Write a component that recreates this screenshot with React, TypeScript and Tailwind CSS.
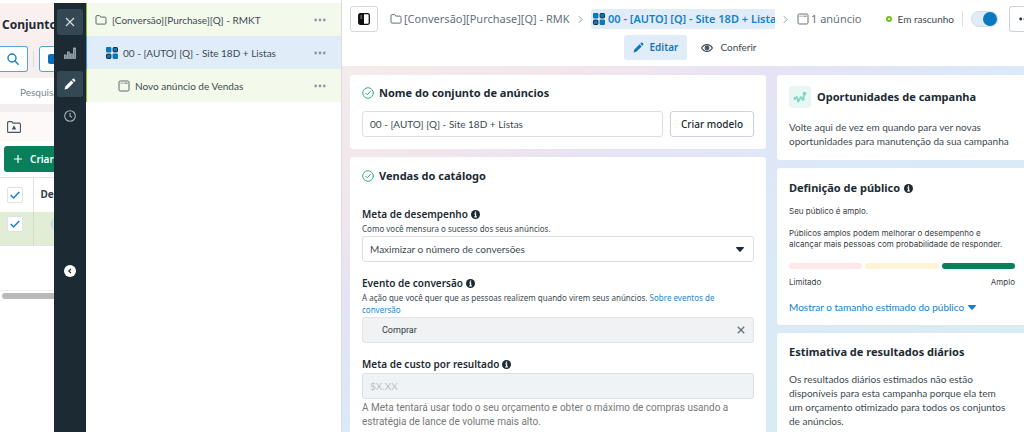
import { useState, type ReactNode } from "react";

const lato = "font-['Lato','Noto_Sans',sans-serif]";
const noto = "font-['Noto_Sans',sans-serif]";

function FolderIcon({ className }: { className: string }) {
  return (
    <svg viewBox="0 0 12 12" className={className} fill="none" stroke="currentColor" strokeWidth="1" strokeLinejoin="round">
      <path d="M1 2.6c0-.6.4-1 1-1h2.3c.4 0 .7.2.9.5l.6 1h4.2c.6 0 1 .4 1 1v5c0 .6-.4 1-1 1H2c-.6 0-1-.4-1-1z" />
    </svg>
  );
}

function GridIcon({ className }: { className: string }) {
  return (
    <svg viewBox="0 0 12 12" className={className}>
      <rect x="0" y="0" width="5.4" height="5.4" rx="1" fill="#0a78be" />
      <rect x="7.1" y="0.5" width="4.4" height="4.4" rx="0.8" fill="#0a78be" stroke="#1c2b33" />
      <rect x="0.5" y="7.1" width="4.4" height="4.4" rx="0.8" fill="#0a78be" stroke="#1c2b33" />
      <rect x="6.6" y="6.6" width="5.4" height="5.4" rx="1" fill="#0a78be" />
    </svg>
  );
}

function AdIcon({ className }: { className: string }) {
  return (
    <svg viewBox="0 0 12 12" className={className} fill="none" stroke="currentColor" strokeWidth="1">
      <rect x="1" y="1" width="10" height="10" rx="1.2" />
      <path d="M2.6 3.2h1M4.6 3.2h1M6.6 3.2h3" />
    </svg>
  );
}

function PencilIcon({ className }: { className: string }) {
  return (
    <svg viewBox="0 0 12 12" className={className} fill="currentColor">
      <path d="M.6 11.4l.7-3L7.2 2.5l2.3 2.3-5.9 5.9zM7.9 1.8l.9-.9c.4-.4 1-.4 1.4 0l.9.9c.4.4.4 1 0 1.4l-.9.9z" />
    </svg>
  );
}

function CheckCircle() {
  return (
    <svg viewBox="0 0 12 12" className="size-3 shrink-0" fill="none" stroke="#3fae86" strokeWidth="1" strokeLinecap="round" strokeLinejoin="round">
      <circle cx="6" cy="6" r="5.3" />
      <path d="M3.8 6.3l1.5 1.5 3-3.3" />
    </svg>
  );
}

function InfoIcon() {
  return (
    <svg viewBox="0 0 10 10" className="size-[9px] shrink-0">
      <circle cx="5" cy="5" r="5" fill="#1c2b33" />
      <path d="M5 1.6v1.5M3.7 4.4h1.4v3.1M3.6 7.6h2.9" stroke="#fff" strokeWidth="1.4" fill="none" />
    </svg>
  );
}

function Chevron() {
  return (
    <svg viewBox="0 0 6 10" className="h-[9px] w-[5px] shrink-0 text-[#8a949b]" fill="none" stroke="currentColor" strokeWidth="1.1">
      <path d="M1 1l4 4-4 4" />
    </svg>
  );
}

function Caret({ className }: { className: string }) {
  return (
    <svg viewBox="0 0 8 5" className={className} fill="currentColor">
      <path d="M.6 0h6.8c.5 0 .7.5.4.9L4.6 4.6c-.3.4-.9.4-1.2 0L.2.9C-.1.5.1 0 .6 0z" />
    </svg>
  );
}

function Dots() {
  return (
    <svg viewBox="0 0 12 4" className="h-1 w-3" fill="currentColor">
      <circle cx="1.7" cy="2" r="1.4" />
      <circle cx="6" cy="2" r="1.4" />
      <circle cx="10.3" cy="2" r="1.4" />
    </svg>
  );
}

function Tick({ label }: { label: string }) {
  return (
    <label className="grid size-4 place-items-center">
      <input type="checkbox" defaultChecked aria-label={label} className="peer col-start-1 row-start-1 size-4 appearance-none rounded-[2px] border border-[#dfe3e8] bg-white" />
      <svg viewBox="0 0 10 8" className="invisible pointer-events-none col-start-1 row-start-1 h-2 w-[10px] peer-checked:visible" fill="none" stroke="#1580cc" strokeWidth="1.5">
        <path d="M.7 4l2.8 2.9L9.3 .9" />
      </svg>
    </label>
  );
}

function CampaignList() {
  return (
    <section className="mt-[3px] w-[54px] shrink-0 overflow-hidden whitespace-nowrap bg-white">
      <div className="bg-linear-to-b from-[#fbf1ef] to-[#f5eeef]">
        <h1 className={`${noto} pt-[13px] pl-[2px] text-xs leading-[18px] font-bold text-[#1c2b33]`}>Conjuntos de anúncios</h1>
        <div className="mt-[12px] flex h-[26px] w-40 items-center">
          <button aria-label="Buscar" className="flex h-[26px] w-7 items-center justify-center rounded-r-[3px] border border-l-0 border-[#55a2d8] bg-white text-[#1580c4]">
            <svg viewBox="0 0 12 12" className="mr-[2px] size-3" fill="none" stroke="currentColor" strokeWidth="1.4" strokeLinecap="round">
              <circle cx="5" cy="5" r="4" />
              <path d="M8 8l3.2 3.2" />
            </svg>
          </button>
          <span className="mx-[5px] h-4 w-px bg-[#dcdde2]" />
          <button aria-label="Salvar pesquisa" className="flex h-[26px] w-16 items-center rounded-[3px] border border-[#55a2d8] bg-white pl-2">
            <span className="size-[10px] rounded-[2px] bg-[#0a6fb8]" />
          </button>
        </div>
      </div>
      <div className="bg-[#f5eeef] pt-[6px]">
        <label className="block h-[26px] bg-white pl-5">
          <input aria-label="Pesquisar" placeholder="Pesquisar e filtrar" className={`${lato} h-full w-32 text-[10px] outline-none placeholder:text-[#7b868c]`} />
        </label>
      </div>
      <div className="flex h-[37px] items-center border-t-8 border-[#f1eef0] bg-[#fdf9f9] pl-[7px] text-[#46545c]">
        <svg viewBox="0 0 14 12" className="h-3 w-[14px]" fill="none" stroke="currentColor" strokeWidth="1.1" strokeLinejoin="round">
          <path d="M.6 1.6c0-.6.4-1 1-1h3.2l1.2 1.5h6.4c.6 0 1 .4 1 1v7.3c0 .6-.4 1-1 1H1.6c-.6 0-1-.4-1-1z" />
          <path d="M7 4.2l2.3 4.4H4.7z" fill="currentColor" stroke="none" />
        </svg>
      </div>
      <div className="pt-[5px] pb-[5px] pl-1">
        <button className={`${noto} flex h-[26px] w-20 items-center gap-2 rounded-[3px] bg-[#0a7f5c] pl-[10px] text-[10px] font-semibold text-white`}>
          <svg viewBox="0 0 8 8" className="size-2" stroke="currentColor" strokeWidth="1.2">
            <path d="M4 0v8M0 4h8" />
          </svg>
          Criar
        </button>
      </div>
      <table className="w-40 table-fixed border-collapse border-t border-[#dfe3e8]">
        <thead>
          <tr className="h-[34px]">
            <th className="w-[33px] border-r border-[#dfe3e8] pl-[7px]"><Tick label="Selecionar tudo" /></th>
            <th className={`${noto} pl-[7px] text-left text-[10px] font-bold text-[#344048]`}>Desativado</th>
          </tr>
        </thead>
        <tbody>
          <tr className="h-[34px] border-b border-[#dfe3e8] bg-[#e2edd6] align-top">
            <td className="border-r border-[#d3dcc9] pt-1 pl-[7px]"><Tick label="Selecionar conjunto" /></td>
            <td className="pt-[6px] pl-[17px]"><span className="block h-3 w-6 rounded-full border border-[#b7cfe0] bg-[#d6e5ee]" /></td>
          </tr>
        </tbody>
      </table>
      <div className="mt-11 border-t border-[#ebedf0] pt-[2px] pl-[2px]">
        <div className="h-[6px] w-40 rounded-full bg-[#b9b9b9]" />
      </div>
    </section>
  );
}

function ToolRail() {
  const tile = "flex size-[26px] items-center justify-center rounded-[3px]";
  return (
    <nav aria-label="Ferramentas" className="mt-[3px] flex w-8 shrink-0 flex-col items-center bg-[#1c2b33] pt-[6px] text-[#d5dadd]">
      <button aria-label="Fechar" className={`${tile} bg-[#344854]`}>
        <svg viewBox="0 0 10 10" className="size-[10px]" fill="none" stroke="currentColor" strokeWidth="1.2"><path d="M1 1l8 8M9 1L1 9" /></svg>
      </button>
      <button aria-label="Gráficos" className={`${tile} mt-[5px]`}>
        <svg viewBox="0 0 12 12" className="size-3" fill="#6f7d85" stroke="#aab3b8" strokeWidth=".8">
          <rect x=".5" y="8" width="1.8" height="3.5" /><rect x="3.5" y="5" width="1.8" height="6.5" /><rect x="6.5" y="7" width="1.8" height="4.5" /><rect x="9.6" y="1" width="1.8" height="10.5" />
        </svg>
      </button>
      <button aria-label="Editar" className={`${tile} mt-[5px] bg-[#344854] text-white`}><PencilIcon className="size-3" /></button>
      <button aria-label="Histórico" className={`${tile} mt-[6px]`}>
        <svg viewBox="0 0 12 12" className="size-3" fill="none" stroke="#aab3b8" strokeWidth="1.1"><circle cx="6" cy="6" r="5.3" /><path d="M6 3v3.2l2 1" /></svg>
      </button>
      <button aria-label="Recolher" className="mt-[136px] flex size-3 items-center justify-center rounded-full bg-white text-[#1c2b33]">
        <svg viewBox="0 0 6 6" className="size-[6px]" fill="none" stroke="currentColor" strokeWidth="1.2"><path d="M4 .8L1.8 3 4 5.2" /></svg>
      </button>
    </nav>
  );
}

function TreeRow({ icon, label, className }: { icon: ReactNode; label: string; className: string }) {
  return (
    <li className={`flex h-[33px] items-center border-l pr-[15px] ${className}`}>
      {icon}
      <a href="#item" className={`${lato} flex-1 pt-px pl-[5px] text-[10px] whitespace-nowrap text-[#3c4a52]`}>{label}</a>
      <button aria-label={`Opções de ${label}`} className="text-[#9299a6]"><Dots /></button>
    </li>
  );
}

function SectionTitle({ children }: { children: ReactNode }) {
  return (
    <h2 className={`${noto} flex items-center gap-[5px] text-[11px] leading-4 font-bold text-[#1c2b33]`}>
      <CheckCircle />
      {children}
    </h2>
  );
}

function FieldLabel({ id, children }: { id: string; children: ReactNode }) {
  return (
    <label htmlFor={id} className={`${noto} flex items-center gap-[3px] text-[10px] leading-4 font-semibold text-[#1c2b33]`}>
      {children}
      <InfoIcon />
    </label>
  );
}

function AdSetForm() {
  const field = `${lato} w-full rounded-[3px] border border-[#d9dfe5] px-[7px] text-[10px] text-[#3c4a52] outline-none`;
  const [event, setEvent] = useState("Comprar");
  return (
    <form className="flex min-w-0 flex-1 flex-col gap-2">
      <section className="rounded-[3px] bg-white px-3 pt-[10px] pb-3">
        <SectionTitle>Nome do conjunto de anúncios</SectionTitle>
        <div className="mt-[10px] flex gap-[7px]">
          <input aria-label="Nome do conjunto de anúncios" defaultValue="00 - [AUTO] [Q] - Site 18D + Listas" className={`${field} h-[26px] min-w-0 flex-1`} />
          <button type="button" className={`${noto} h-[26px] w-[84px] rounded-[3px] border border-[#ccd3da] text-[10px] font-medium whitespace-nowrap text-[#1c2b33]`}>Criar modelo</button>
        </div>
      </section>
      <section className="rounded-[3px] bg-white px-3 pt-[11px] pb-3">
        <SectionTitle>Vendas do catálogo</SectionTitle>
        <div className="mt-[22px] flex flex-col gap-[13px]">
          <div>
            <FieldLabel id="goal">Meta de desempenho</FieldLabel>
            <p className={`${noto} my-px text-[8px] leading-3 text-[#3c4a52]`}>Como você mensura o sucesso dos seus anúncios.</p>
            <div className="grid items-center">
              <select id="goal" className={`${field} col-start-1 row-start-1 h-[26px] appearance-none bg-white`}>
                <option>Maximizar o número de conversões</option>
              </select>
              <Caret className="pointer-events-none col-start-1 row-start-1 mr-[10px] h-[5px] w-2 justify-self-end text-[#1c2b33]" />
            </div>
          </div>
          <div>
            <FieldLabel id="event">Evento de conversão</FieldLabel>
            <p className={`${noto} my-px text-[8px] leading-3 text-[#3c4a52]`}>
              A ação que você quer que as pessoas realizem quando virem seus anúncios.{" "}
              <a href="#eventos" className="text-[#1f86cc]">Sobre eventos de<br />conversão</a>
            </p>
            <div className="flex h-[26px] items-center rounded-[3px] border border-[#e0e3e7] bg-[#f1f2f4] pr-2 pl-[19px]">
              <input id="event" value={event} onChange={(e) => setEvent(e.target.value)} className="h-full min-w-0 flex-1 bg-transparent font-['Roboto',sans-serif] text-[9px] text-[#2f3a40] outline-none" />
              <button type="button" aria-label="Limpar" onClick={() => setEvent("")} className="text-[#66727a]">
                <svg viewBox="0 0 8 8" className="size-2" fill="none" stroke="currentColor" strokeWidth="1.3"><path d="M.8.8l6.4 6.4M7.2.8L.8 7.2" /></svg>
              </button>
            </div>
          </div>
          <div>
            <FieldLabel id="cost">Meta de custo por resultado</FieldLabel>
            <input id="cost" disabled placeholder="$X.XX" className={`${field} h-[26px] bg-[#f0f3f6] placeholder:text-[#b9c1c7]`} />
            <p className="mt-[2px] max-w-[370px] font-['Roboto',sans-serif] text-[10px] leading-[14px] text-[#77797b]">
              A Meta tentará usar todo o seu orçamento e obter o máximo de compras usando a estratégia de lance de volume mais alto.
            </p>
          </div>
        </div>
      </section>
    </form>
  );
}

function Insights() {
  const card = "rounded-l-[3px] bg-white pr-[9px] pl-3";
  const title = `${noto} text-[11px] leading-4 font-bold text-[#1c2b33]`;
  const body = `${lato} text-[10px] leading-[14px] text-[#3c4a52]`;
  const small = "font-['Inter',sans-serif] text-[8px] leading-[11px] text-[#3a4146]";
  return (
    <aside className="flex w-[247px] shrink-0 flex-col gap-2">
      <section className={`${card} pt-[11px] pb-3`}>
        <div className="flex items-center gap-[6px]">
          <span className="flex size-[22px] items-center justify-center rounded-[4px] bg-[#e6f7f4]">
            <svg viewBox="0 0 14 12" className="h-3 w-[14px]" fill="none" stroke="#7fd3c2" strokeWidth="1.6" strokeLinejoin="round">
              <path d="M1.8 7.4l2-1.4 1.4 4L8 6l2.2 2 1.3-5.5" />
              <g fill="#7fd3c2" stroke="none">
                <circle cx="1.8" cy="7.4" r="1.3" />
                <circle cx="5.2" cy="10" r="1.3" />
                <circle cx="10" cy="8.2" r="1.5" />
                <circle cx="11.5" cy="2.5" r="1.8" />
              </g>
            </svg>
          </span>
          <h2 className={title}>Oportunidades de campanha</h2>
        </div>
        <p className={`${body} mt-3`}>Volte aqui de vez em quando para ver novas oportunidades para manutenção da sua campanha</p>
      </section>
      <section className={`${card} pt-3 pb-[11px]`}>
        <h2 className={`${title} flex items-center gap-1`}>Definição de público <InfoIcon /></h2>
        <p className={`${small} mt-[10px]`}>Seu público é amplo.</p>
        <p className={`${small} mt-[11px]`}>Públicos amplos podem melhorar o desempenho e alcançar mais pessoas com probabilidade de responder.</p>
        <div className="mt-[13px] grid grid-cols-3 gap-[3px]">
          <span className="h-[6px] rounded-full bg-[#ffe8e8]" />
          <span className="h-[6px] rounded-full bg-[#fff3d6]" />
          <span className="h-[6px] rounded-full bg-[#0a8159]" />
        </div>
        <div className={`${small} mt-2 flex justify-between`}><span>Limitado</span><span>Amplo</span></div>
        <button className={`${lato} mt-3 flex items-center gap-1 text-[10px] leading-[14px] text-[#1580c8]`}>
          Mostrar o tamanho estimado do público
          <Caret className="h-[5px] w-2" />
        </button>
      </section>
      <section className={`${card} flex-1 pt-[11px] pb-2`}>
        <h2 className={title}>Estimativa de resultados diários</h2>
        <p className={`${body} mt-3`}>{"Os resultados diários estimados não estão disponíveis para esta campanha porque ela tem um\u00a0orçamento otimizado para todos os conjuntos de\u00a0anúncios."}</p>
      </section>
    </aside>
  );
}

function EditorHeader() {
  return (
    <header className="bg-white pt-[6px] pb-[6px]">
      <div className={`${noto} flex h-[26px] items-center pl-2 text-[11px] whitespace-nowrap text-[#65717a]`}>
        <button aria-label="Alternar painel" className="flex h-[26px] w-7 shrink-0 items-center justify-center rounded-[3px] border border-[#d3d9e0]">
          <svg viewBox="0 0 12 12" className="size-3"><rect x=".7" y=".7" width="10.6" height="10.6" rx="1.5" fill="none" stroke="#111" strokeWidth="1.3" /><path d="M1 1h5v10H1z" fill="#111" /><path d="M2.5 3h1.5M2.5 5h1.5" stroke="#fff" strokeWidth=".7" /></svg>
        </button>
        <nav aria-label="Hierarquia" className="ml-3 flex min-w-0 items-center">
          <FolderIcon className="size-3 shrink-0" />
          <a href="#campanha" className="ml-[2px] w-[166px]">[Conversão][Purchase][Q] - RMK</a>
          <span className="mx-2 flex"><Chevron /></span>
          <a href="#conjunto" className="flex h-5 w-[184px] items-center gap-[3px] overflow-hidden rounded-l-[3px] bg-[#e0edf8] pl-[2px] font-semibold text-[#1580c8]">
            <GridIcon className="size-3 shrink-0" />00 - [AUTO] [Q] - Site 18D + Lista
          </a>
          <span className="mx-2 flex"><Chevron /></span>
          <AdIcon className="ml-px size-3 shrink-0" />
          <a href="#anuncio" className="ml-[2px]">1 anúncio</a>
        </nav>
        <span className={`${lato} ml-auto flex items-center gap-[6px] text-[10px] text-[#3c4a52]`}>
          <span className="size-[6px] rounded-full border-2 border-[#6cc417]" />Em rascunho
        </span>
        <span className="mx-2 h-4 w-px bg-[#dcdfe4]" />
        <input type="checkbox" role="switch" defaultChecked aria-label="Ativar conjunto" className="flex h-4 w-[27px] shrink-0 appearance-none items-center rounded-full border border-[#cfdfeb] bg-[#e0edf8] before:size-[14px] before:rounded-full before:bg-[#8a949b] before:content-[''] checked:justify-end checked:before:bg-[#0a78be]" />
        <button aria-label="Mais opções" className="ml-[11px] flex h-[26px] w-[15px] shrink-0 items-center overflow-hidden rounded-l-[3px] border border-r-0 border-[#ccd3da] pl-[9px] text-[#1c2b33]">
          <span className="shrink-0"><Dots /></span>
        </button>
      </div>
      <div className={`${noto} mt-[3px] flex items-center justify-center gap-[14px] pl-[14px] text-[10px]`}>
        <button className="flex h-[25px] items-center gap-[6px] rounded-[3px] bg-[#e0edf8] px-[9px] font-semibold text-[#0f76bd]"><PencilIcon className="size-[11px]" />Editar</button>
        <button className={`${lato} flex items-center gap-[7px] text-[#3c4a52]`}>
          <svg viewBox="0 0 12 8" className="h-2 w-3" fill="none" stroke="currentColor" strokeWidth="1.1"><path d="M.6 4C1.8 1.8 3.7.6 6 .6S10.2 1.8 11.4 4C10.2 6.2 8.3 7.4 6 7.4S1.8 6.2.6 4z" /><circle cx="6" cy="4" r="1.9" /><circle cx="6" cy="4" r=".6" fill="currentColor" /></svg>
          Conferir
        </button>
      </div>
    </header>
  );
}

export default function App() {
  return (
    <div className="flex h-screen min-h-96 overflow-hidden bg-white">
      <CampaignList />
      <ToolRail />
      <nav aria-label="Estrutura da campanha" className="w-64 shrink-0 border-r border-[#d9dce1] bg-white pt-[3px]">
        <ul>
          <TreeRow className="border-[#7cc52c] bg-[#f3faeb] pl-2" icon={<FolderIcon className="size-3 text-[#5b676f]" />} label="[Conversão][Purchase][Q] - RMKT" />
          <TreeRow className="border-[#3f97d4] bg-[#e0ecf7] pl-[19px]" icon={<GridIcon className="size-3" />} label="00 - [AUTO] [Q] - Site 18D + Listas" />
          <TreeRow className="border-[#7cc52c] bg-[#f3faeb] pl-[31px]" icon={<AdIcon className="size-3 text-[#5b676f]" />} label="Novo anúncio de Vendas" />
        </ul>
      </nav>
      <main className="flex min-w-0 flex-1 flex-col">
        <EditorHeader />
        <div className="flex min-h-0 flex-1 gap-[11px] overflow-hidden bg-[linear-gradient(to_bottom_right,#f4ecec,#f2e6ec_18%,#e6e3f5_32%,#dbe9f8_50%,#d8ecf3)] pt-[9px] pl-2">
          <AdSetForm />
          <Insights />
        </div>
      </main>
    </div>
  );
}
